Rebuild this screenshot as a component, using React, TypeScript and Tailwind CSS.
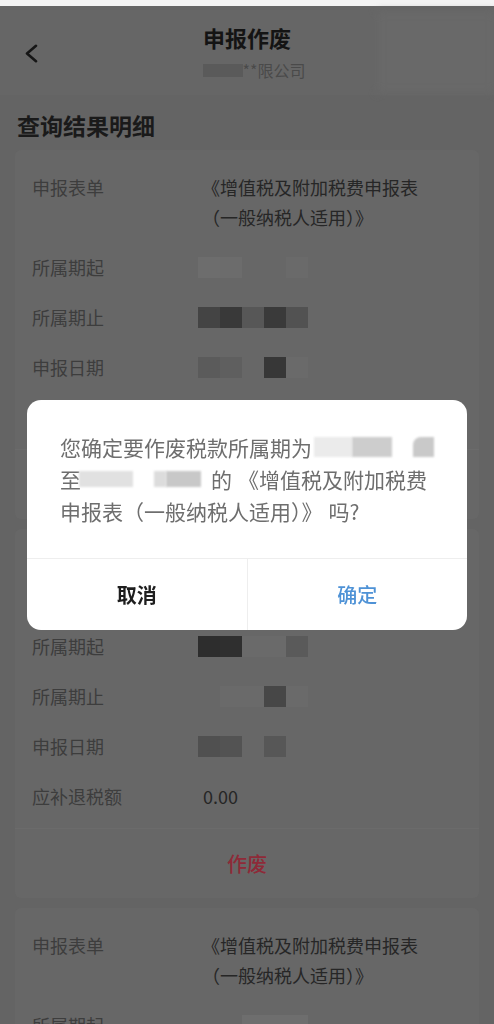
import React from "react";

type Cell = string | null;

const FONT = "font-['Noto_Sans_CJK_SC','Noto_Sans',sans-serif]";

function Blocks({ cells }: { cells: Cell[] }) {
  return (
    <div className="ml-[-4px] flex h-[30px] items-center">
      {cells.map((c, i) => (
        <div
          key={i}
          className="h-[21px] w-[22px] blur-[0.6px]"
          style={{ backgroundColor: c ?? "transparent" }}
        />
      ))}
    </div>
  );
}

function Row({ label, children }: { label: string; children: React.ReactNode }) {
  return (
    <div className="flex py-[10px] text-[18px] leading-[30px]">
      <div className="w-[170px] shrink-0 text-[#3d3d3d]">{label}</div>
      <div className="flex-1 text-[#262626]">{children}</div>
    </div>
  );
}

function FormName() {
  return (
    <div>
      <div>《增值税及附加税费申报表</div>
      <div>（一般纳税人适用）》</div>
    </div>
  );
}

function Card({
  start,
  end,
  date,
}: {
  start: Cell[];
  end: Cell[];
  date: Cell[];
}) {
  return (
    <div className="mx-[15px] rounded-[6px] bg-[#676767] pt-[12px]">
      <div className="pb-[7px] pl-[17px] pr-[12px]">
        <Row label="申报表单">
          <FormName />
        </Row>
        <Row label="所属期起">
          <Blocks cells={start} />
        </Row>
        <Row label="所属期止">
          <Blocks cells={end} />
        </Row>
        <Row label="申报日期">
          <Blocks cells={date} />
        </Row>
        <Row label="应补退税额">
          <span className="pl-[1px]">0.00</span>
        </Row>
      </div>
      <div className="flex h-[70px] items-center justify-center border-t border-[#6b6b6b] text-[20px] font-medium text-[#8e2a38]">
        作废
      </div>
    </div>
  );
}

function Chevron() {
  return (
    <svg width="14" height="19" viewBox="0 0 14 19" fill="none">
      <polyline
        points="12,1.8 3,9.5 12,17.2"
        stroke="#161616"
        strokeWidth="2.6"
        strokeLinecap="round"
        strokeLinejoin="round"
      />
    </svg>
  );
}

export default function App() {
  return (
    <div className={`relative h-[1024px] w-full overflow-hidden bg-[#646464] ${FONT}`}>
      <div className="h-[6px] bg-[#f4f4f4]" />

      {/* header */}
      <div className="relative h-[89px] bg-[#666666]">
        <div className="absolute right-0 top-[6px] h-[80px] w-[116px] bg-[#696969] blur-[4px]" />
        <div className="absolute left-[24px] top-[38px]">
          <Chevron />
        </div>
        <div className="relative flex flex-col items-center pt-[17px]">
          <div className="text-[22px] font-bold leading-[28px] text-[#141414]">申报作废</div>
          <div className="ml-[14px] mt-[8px] flex items-center text-[16px] leading-[22px] text-[#4a4a4a]">
            <div className="h-[13px] w-[40px] bg-[#5a5a5a] blur-[0.6px]" />
            <span>**限公司</span>
          </div>
        </div>
      </div>

      {/* body */}
      <div className="pt-[15px]">
        <div className="mb-[10px] pl-[17px] text-[23px] font-bold leading-[30px] text-[#1a1a1a]">
          查询结果明细
        </div>
        <div className="flex flex-col gap-[10px]">
          <Card
            start={["#6d6d6d", "#6c6c6c", null, null, "#6a6a6a"]}
            end={["#444444", "#393939", "#575757", "#3a3a3a", "#525252"]}
            date={["#5b5b5b", "#5f5f5f", null, "#373737", "#6a6a6a"]}
          />
          <Card
            start={["#2d2d2d", "#2f2f2f", "#6a6a6a", "#6a6a6a", "#5a5a5a"]}
            end={[null, "#6a6a6a", "#6a6a6a", "#474747", "#6a6a6a"]}
            date={["#505050", "#535353", null, "#575757", null]}
          />
          <Card
            start={[null, null, "#6e6e6e", "#6e6e6e", "#6e6e6e"]}
            end={[null, null, null, null, null]}
            date={[null, null, null, null, null]}
          />
        </div>
      </div>

      {/* dialog */}
      <div className="fixed inset-0 flex items-center justify-center">
        <div className="mt-[6px] w-[440px] overflow-hidden rounded-[14px] bg-white">
          <div className="px-[33px] pb-[31px] pt-[31px] text-[21px] leading-[32px] text-[#6e6e6e]">
            <div className="flex h-[32px] items-center whitespace-nowrap">
              <span>您确定要作废税款所属期为</span>
              <div className="ml-[2px] h-[20px] w-[41px] bg-[#ebebeb] blur-[0.8px]" />
              <div className="h-[20px] w-[44px] bg-[#cdcdcd] blur-[0.8px]" />
              <div className="ml-[21px] h-[20px] w-[23px] rounded-tl-[8px] bg-[#c9c9c9] blur-[1px]" />
            </div>
            <div className="flex h-[32px] items-center whitespace-nowrap">
              <span>至</span>
              <div className="ml-[-2px] h-[16px] w-[54px] bg-[#e1e1e1] blur-[0.8px]" />
              <div className="ml-[21px] h-[16px] w-[12px] bg-[#dcdcdc] blur-[0.8px]" />
              <div className="h-[16px] w-[35px] bg-[#c8c8c8] blur-[0.8px]" />
              <span className="ml-[10px]">的</span>
              <span className="ml-[6px]">《增值税及附加税费</span>
            </div>
            <div className="flex h-[32px] items-center whitespace-nowrap">
              <span>申报表（一般纳税人适用）》</span>
              <span className="ml-[6px]">吗?</span>
            </div>
          </div>
          <div className="flex h-[72px] border-t border-[#eeeeee] text-[20px]">
            <div className="flex flex-1 items-center justify-center font-bold text-[#1e1e1e]">
              取消
            </div>
            <div className="w-px bg-[#eeeeee]" />
            <div className="flex flex-1 items-center justify-center font-medium text-[#4e92d6]">
              确定
            </div>
          </div>
        </div>
      </div>
    </div>
  );
}
